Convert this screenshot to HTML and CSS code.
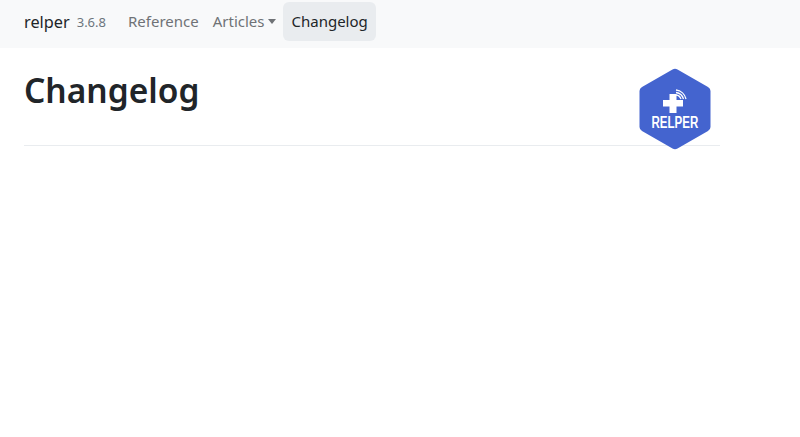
FILE: index.html
```html
<!DOCTYPE html>
<html lang="en">
<head>
  <meta charset="UTF-8">
  <title>Changelog • relper</title>
  <link rel="stylesheet" href="styles.css">
</head>
<body>
  <nav class="navbar">
    <a class="brand" href="#">relper</a>
    <span class="version">3.6.8</span>
    <ul class="nav-links">
      <li><a class="nav-link" href="#">Reference</a></li>
      <li><a class="nav-link" href="#">Articles<span class="caret"></span></a></li>
      <li><a class="nav-link active" href="#">Changelog</a></li>
    </ul>
  </nav>
  <main class="container">
    <div class="page-header">
      <h1>Changelog</h1>
      <svg class="logo" viewBox="0 0 72 82">
        <path d="M33.500 1.500 Q36 0 38.500 1.500 L69 19 Q71.500 20.500 71.500 23 L71.500 59 Q71.500 61.500 69 63 L38.500 80.500 Q36 82 33.500 80.500 L3 63 Q.5 61.500 .5 59 L.5 23 Q.5 20.500 3 19 Z" fill="#4464cf"/>
        <path d="M30.500 26 H37.500 V32 H44 V38.500 H37.500 V45 H30.500 V38.500 H24 V32 H30.500 Z" fill="#fff"/>
        <g fill="none" stroke="#fff" stroke-width="1.300">
          <path d="M37 27 A6 6 0 0 1 42 31"/>
          <path d="M37 24.500 A9 9 0 0 1 44.500 31"/>
          <path d="M37 22 A11.500 11.500 0 0 1 47 31"/>
        </g>
        <text class="logo-text" transform="translate(12.500 59.500) scale(.68 1)">RELPER</text>
      </svg>
    </div>
  </main>
</body>
</html>
```

FILE: styles.css
```css
* {
  box-sizing: border-box;
  margin: 0;
  padding: 0;
}
body {
  background-color: #fff;
  font-family: "Noto Sans", "Open Sans", sans-serif;
  color: #212529;
}
a {
  text-decoration: none;
}
.navbar {
  display: flex;
  align-items: center;
  height: 48px;
  padding: 0 24px 5px;
  background-color: #f8f9fa;
}
.brand {
  font-size: 16.300px;
  color: #212529;
}
.version {
  margin-left: 7px;
  font-size: 13px;
  color: #6c757d;
}
.nav-links {
  display: flex;
  margin-left: 15px;
  list-style: none;
}
.nav-link {
  display: block;
  padding: 8px 7px;
  border-radius: 6px;
  font-size: 15px;
  line-height: 23px;
  color: #6f7276;
}
.nav-link.active {
  padding: 8px;
  background-color: #e9ecef;
  color: #212529;
}
.caret {
  display: inline-block;
  margin-left: 4px;
  vertical-align: 3px;
  border-top: 5px solid #6f7276;
  border-left: 4.500px solid transparent;
  border-right: 4.500px solid transparent;
}
.container {
  width: 720px;
  min-height: 389px;
  padding-left: 24px;
}
.page-header {
  display: flex;
  justify-content: space-between;
  align-items: flex-start;
  height: 98px;
  padding: 20px 9px 0 0;
  border-bottom: 1px solid #e9ecef;
}
.page-header h1 {
  font-size: 33.500px;
  font-weight: 600;
  line-height: 44px;
}
.logo {
  flex: none;
  display: block;
  width: 72px;
  height: 82px;
  overflow: visible;
}
.logo-text {
  font-family: "Liberation Sans", sans-serif;
  font-size: 17px;
  font-weight: 700;
  fill: #fff;
}
```
